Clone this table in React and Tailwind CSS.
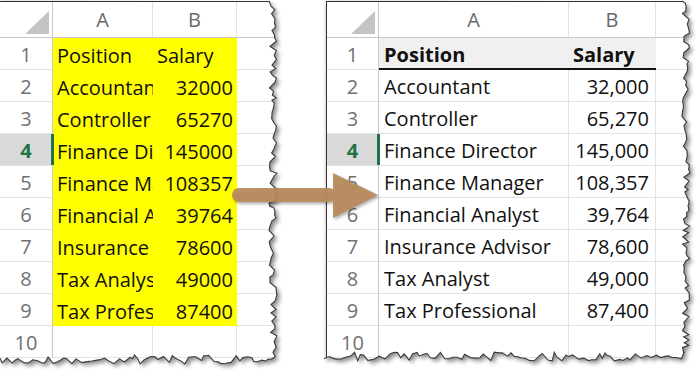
import React from 'react';

// deterministic jitter so the torn edge is stable between renders
function makeRng(seed) {
  let s = seed;
  return () => {
    s = (s * 16807) % 2147483647;
    return (s - 1) / 2147483646;
  };
}

function tornPoints(w, h, seed) {
  const r = makeRng(seed);
  const pts = [];
  for (let y = 0; y < h - 4; y += 2 + r() * 4) pts.push([w - 6 + r() * 8, y]);
  for (let x = w - 4; x > -2; x -= 2 + r() * 4) pts.push([x, h - 7 + r() * 9]);
  pts.push([-2, h - 6 + r() * 6]);
  return pts;
}

const toD = (pts) => pts.map((p, i) => `${i ? 'L' : 'M'}${p[0].toFixed(1)} ${p[1].toFixed(1)}`).join(' ');

const rows = [
  ['Position', 'Salary'],
  ['Accountant', '32000'],
  ['Controller', '65270'],
  ['Finance Director', '145000'],
  ['Finance Manager', '108357'],
  ['Financial Analyst', '39764'],
  ['Insurance Advisor', '78600'],
  ['Tax Analyst', '49000'],
  ['Tax Professional', '87400'],
];

const fmt = (v) => Number(v).toLocaleString('en-US');

const Corner = () => (
  <div className="relative border-r border-b border-[#c8c8c8] bg-white">
    <svg className="absolute right-[3px] bottom-[3px]" width="24" height="23" viewBox="0 0 24 23">
      <polygon points="24,0 24,23 0,23" fill="#c4c4c4" />
    </svg>
  </div>
);

const ColHead = ({ label, last }) => (
  <div className={`flex items-center justify-center border-b border-[#c8c8c8] bg-white text-[20px] text-[#6a6a6a] ${last ? '' : 'border-r border-r-[#e2e2e2]'}`}>
    {label}
  </div>
);

const RowHead = ({ n }) => {
  const active = n === 4;
  return (
    <div
      className={`relative flex items-end justify-center pb-[4px] border-r border-b border-r-[#c8c8c8] border-b-[#e2e2e2] text-[20px] leading-none ${
        active ? 'bg-[#d9d9d9] font-bold text-[#217346]' : 'bg-white text-[#707070]'
      }`}
    >
      {n}
      {active && <div className="absolute -right-[2px] top-0 bottom-0 w-[3px] bg-[#217346]" />}
    </div>
  );
};

function Torn({ w, h, seed, children }) {
  const pts = tornPoints(w, h, seed);
  const clip = toD([[0, -2], ...pts, [-2, h + 4], [-2, -2]]) + ' Z';
  const edge = toD(pts);
  const id = `torn-${seed}`;
  return (
    <div className="relative shrink-0" style={{ width: w + 8, height: h + 8 }}>
      <svg className="absolute left-0 top-0 overflow-visible" width={w + 8} height={h + 8}>
        <defs>
          <filter id={`${id}-blur`} x="-5%" y="-5%" width="115%" height="115%">
            <feGaussianBlur stdDeviation="2" />
          </filter>
          <clipPath id={id} clipPathUnits="userSpaceOnUse">
            <path d={clip} />
          </clipPath>
        </defs>
        <path d={clip} transform="translate(3 3)" fill="rgba(0,0,0,0.45)" filter={`url(#${id}-blur)`} />
      </svg>
      <div className="absolute left-0 top-0 overflow-hidden bg-white" style={{ width: w + 4, height: h + 4, clipPath: `url(#${id})` }}>
        {children}
      </div>
      <svg className="absolute left-0 top-0 overflow-visible pointer-events-none" width={w + 8} height={h + 8}>
        <path d={edge} fill="none" stroke="#3a3a3a" strokeWidth="1.1" />
      </svg>
    </div>
  );
}

function LeftSheet() {
  return (
    <div className="grid grid-cols-[53px_100px_84px_60px] grid-rows-[36px_repeat(10,32px)] border-t border-[#333]">
      <Corner />
      <ColHead label="A" />
      <ColHead label="B" />
      <ColHead label="" last />
      {Array.from({ length: 10 }, (_, i) => {
        const row = rows[i];
        return (
          <React.Fragment key={i}>
            <RowHead n={i + 1} />
            {row ? (
              <>
                <div className="flex items-end overflow-hidden whitespace-nowrap bg-[#ffff00] pl-[4px] pb-[4px] text-[20px] leading-none text-[#111]">
                  {row[0]}
                </div>
                <div className={`flex items-end overflow-hidden whitespace-nowrap bg-[#ffff00] px-[4px] pb-[4px] text-[20px] leading-none text-[#111] ${i === 0 ? 'justify-start' : 'justify-end'}`}>
                  {row[1]}
                </div>
              </>
            ) : (
              <>
                <div className="border-r border-b border-[#e2e2e2]" />
                <div className="border-r border-b border-[#e2e2e2]" />
              </>
            )}
            <div className="border-b border-[#e2e2e2]" />
          </React.Fragment>
        );
      })}
    </div>
  );
}

function RightSheet() {
  return (
    <div className="grid grid-cols-[52px_190px_87px_70px] grid-rows-[36px_repeat(10,32px)] border-t border-l border-[#333]">
      <Corner />
      <ColHead label="A" />
      <ColHead label="B" />
      <ColHead label="" last />
      {Array.from({ length: 10 }, (_, i) => {
        const row = rows[i];
        const head = i === 0;
        return (
          <React.Fragment key={i}>
            <RowHead n={i + 1} />
            {row ? (
              <>
                <div
                  className={`flex items-end whitespace-nowrap pl-[5px] text-[20px] leading-none text-[#111] ${
                    head ? 'bg-[#f0f0f0] font-bold border-b-2 border-[#111] pb-[3px]' : 'border-r border-b border-[#e2e2e2] pb-[4px]'
                  }`}
                >
                  {row[0]}
                </div>
                <div
                  className={`flex items-end whitespace-nowrap px-[6px] text-[20px] leading-none text-[#111] ${
                    head ? 'bg-[#f0f0f0] font-bold border-b-2 border-[#111] pb-[3px] justify-start pl-[4px]' : 'justify-end border-r border-b border-[#e2e2e2] pb-[4px]'
                  }`}
                >
                  {head ? row[1] : fmt(row[1])}
                </div>
              </>
            ) : (
              <>
                <div className="border-r border-b border-[#e2e2e2]" />
                <div className="border-r border-b border-[#e2e2e2]" />
              </>
            )}
            <div className="border-b border-[#e2e2e2]" />
          </React.Fragment>
        );
      })}
    </div>
  );
}

const Arrow = () => (
  <svg className="absolute left-[225px] top-[165px] overflow-visible" width="160" height="60" viewBox="0 0 160 60">
    <defs>
      <filter id="arrow-shadow" x="-10%" y="-20%" width="120%" height="150%">
        <feGaussianBlur stdDeviation="1.5" />
      </filter>
    </defs>
    <g transform="translate(1.5 2)" filter="url(#arrow-shadow)" opacity="0.3">
      <rect x="7" y="23" width="104" height="14" rx="7" fill="#000" />
      <polygon points="108,8 153,30 108,53" fill="#000" />
    </g>
    <g opacity="0.92">
      <rect x="7" y="23" width="104" height="14" rx="7" fill="#b98a5b" />
      <polygon points="108,8 153,30 108,53" fill="#b98a5b" />
    </g>
  </svg>
);

export default function App() {
  return (
    <div className="relative w-[700px] h-[380px] overflow-hidden bg-white font-['Open_Sans',sans-serif]">
      <div className="flex items-start pt-px">
        <Torn w={275} h={361} seed={7}>
          <LeftSheet />
        </Torn>
        <div className="ml-[43px]">
          <Torn w={362} h={358} seed={31}>
            <RightSheet />
          </Torn>
        </div>
      </div>
      <Arrow />
    </div>
  );
}
